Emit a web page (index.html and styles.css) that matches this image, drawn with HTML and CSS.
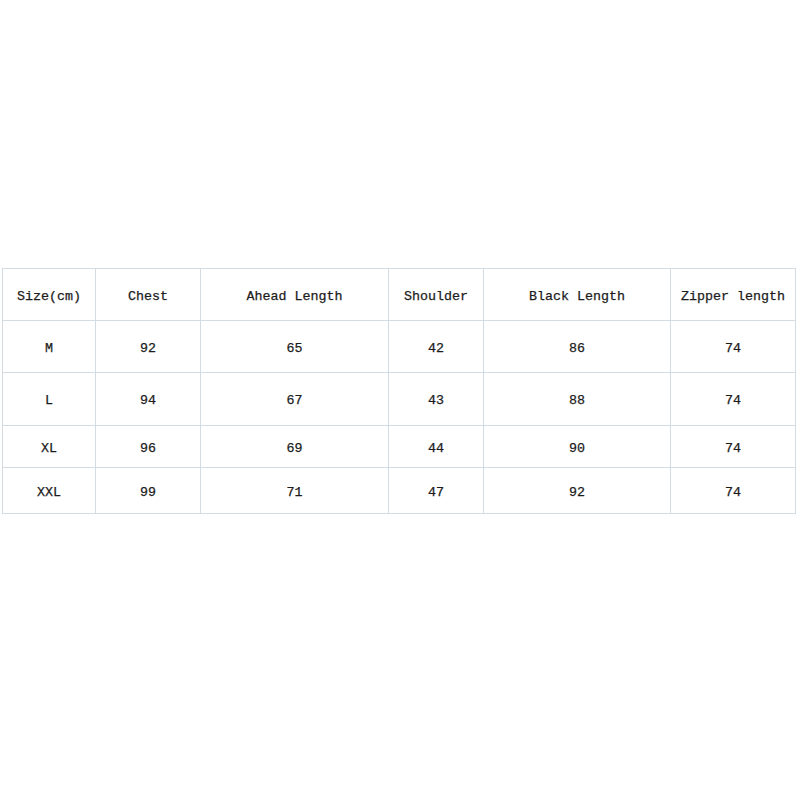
FILE: index.html
```html
<!DOCTYPE html>
<html>
<head>
<meta charset="utf-8">
<link rel="stylesheet" href="styles.css">
</head>
<body>
<div class="sheet">
  <table class="size-table">
    <colgroup>
      <col class="c1"><col class="c2"><col class="c3"><col class="c4"><col class="c5"><col class="c6">
    </colgroup>
    <tr class="r-head"><td>Size(cm)</td><td>Chest</td><td>Ahead Length</td><td>Shoulder</td><td>Black Length</td><td>Zipper length</td></tr>
    <tr class="r-m"><td>M</td><td>92</td><td>65</td><td>42</td><td>86</td><td>74</td></tr>
    <tr class="r-l"><td>L</td><td>94</td><td>67</td><td>43</td><td>88</td><td>74</td></tr>
    <tr class="r-xl"><td>XL</td><td>96</td><td>69</td><td>44</td><td>90</td><td>74</td></tr>
    <tr class="r-xxl"><td>XXL</td><td>99</td><td>71</td><td>47</td><td>92</td><td>74</td></tr>
  </table>
</div>
</body>
</html>
```
FILE: styles.css
```css
html, body {
  margin: 0;
  padding: 0;
  background: #ffffff;
}
.sheet {
  padding: 268px 0 0 2px;
}
.size-table {
  table-layout: fixed;
  border-collapse: separate;
  border-spacing: 0;
  width: 794px;
  border-left: 1px solid #d3dbe3;
  border-top: 1px solid #d3dbe3;
  font-family: "Liberation Mono", monospace;
  font-size: 13.33px;
  color: #1c1c1c;
}
.size-table td {
  border-right: 1px solid #d3dbe3;
  border-bottom: 1px solid #d3dbe3;
  padding: 3px 0 0 0;
  text-align: center;
  vertical-align: middle;
  white-space: nowrap;
  -webkit-text-stroke: 0.25px #1c1c1c;
}
.c1 { width: 93px; }
.c2 { width: 105px; }
.c3 { width: 188px; }
.c4 { width: 95px; }
.c5 { width: 187px; }
.c6 { width: 125px; }
.r-head { height: 52px; }
.r-m { height: 52px; }
.r-l { height: 53px; }
.r-xl { height: 42px; }
.r-xxl { height: 46px; }
```
